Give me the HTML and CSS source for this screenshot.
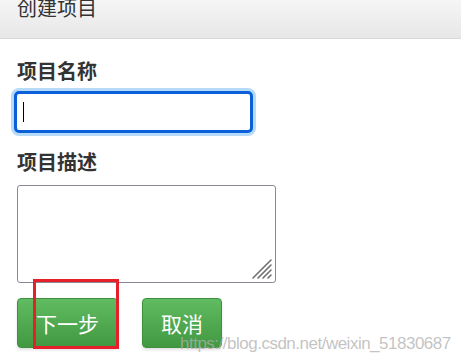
FILE: index.html
```html
<!DOCTYPE html>
<html lang="zh">
<head>
<meta charset="utf-8">
<title>创建项目</title>
<link rel="stylesheet" href="styles.css">
</head>
<body>
<div class="page">
  <div class="header">
    <div class="title">创建项目</div>
  </div>
  <form class="form">
    <label class="label">项目名称</label>
    <div class="input"><span class="caret"></span></div>
    <label class="label label-desc">项目描述</label>
    <div class="textarea-wrap">
      <textarea class="textarea"></textarea>
      <svg class="grip" width="22" height="22" viewBox="0 0 22 22">
        <g stroke="#6f6f6f" stroke-width="1.6" stroke-linecap="round">
          <line x1="2" y1="20" x2="20" y2="2"/>
          <line x1="7" y1="20" x2="20" y2="7"/>
          <line x1="12" y1="20" x2="20" y2="12"/>
          <line x1="17" y1="20" x2="20" y2="17"/>
        </g>
      </svg>
    </div>
    <div class="actions">
      <div class="btn-wrap">
        <button type="button" class="btn">下一步</button>
        <span class="mark"></span>
      </div>
      <button type="button" class="btn">取消</button>
    </div>
  </form>
  <div class="watermark">https://blog.csdn.net/weixin_51830687</div>
</div>
</body>
</html>
```
FILE: styles.css
```css
html, body {
  margin: 0;
  padding: 0;
  background: #fff;
}
.page {
  position: relative;
  width: 461px;
  height: 364px;
  overflow: hidden;
  font-family: "Noto Sans CJK SC", "Microsoft YaHei", sans-serif;
  color: #333;
}
.header {
  box-sizing: border-box;
  height: 41px;
  border-bottom: 1px solid #d9d9d9;
  background: linear-gradient(#f6f6f6, #e7e7e7);
  padding: 0 17px;
}
.title {
  font-size: 20px;
  line-height: 20px;
  margin-top: -2px;
  color: #333;
}
.form {
  display: flex;
  flex-direction: column;
  align-items: flex-start;
  padding: 22px 17px 0;
}
.label {
  font-size: 20px;
  line-height: 20px;
  font-weight: bold;
  color: #333;
}
.input {
  box-sizing: border-box;
  width: 239px;
  height: 42px;
  margin: 10px 0 0 -3px;
  border: 3px solid #0b60da;
  border-radius: 5px;
  box-shadow: 0 0 0 3px #b5dbf8;
  background: #fff;
  padding: 8px 0 0 6px;
}
.caret {
  display: block;
  width: 1px;
  height: 20px;
  background: #000;
}
.label-desc {
  margin-top: 19px;
}
.textarea-wrap {
  position: relative;
  margin-top: 13px;
  width: 259px;
  height: 98px;
}
.textarea {
  display: block;
  box-sizing: border-box;
  width: 259px;
  height: 98px;
  margin: 0;
  border: 1px solid #8b8a94;
  border-radius: 3px;
  resize: none;
  background: #fff;
  padding: 0;
}
.grip {
  position: absolute;
  right: 3px;
  bottom: 3px;
}
.actions {
  display: flex;
  gap: 24px;
  margin-top: 15px;
}
.btn-wrap {
  position: relative;
}
.btn {
  height: 50px;
  padding: 0 18px;
  border: 1px solid #3f8f3f;
  border-radius: 4px;
  background: linear-gradient(#61bc61, #419841);
  box-shadow: 0 2px 3px rgba(0, 0, 0, 0.12);
  color: #fff;
  font-family: "Noto Sans CJK SC", "Microsoft YaHei", sans-serif;
  font-size: 21px;
  line-height: 24px;
}
.mark {
  position: absolute;
  left: 16px;
  top: -19px;
  width: 86px;
  height: 70px;
  box-sizing: border-box;
  border: 3px solid #e61f2a;
}
.watermark {
  position: absolute;
  left: 180px;
  top: 335px;
  font-family: "Liberation Sans", Arial, sans-serif;
  font-size: 17px;
  line-height: 18px;
  letter-spacing: -0.5px;
  color: rgba(175, 175, 175, 0.75);
  white-space: nowrap;
}
```
